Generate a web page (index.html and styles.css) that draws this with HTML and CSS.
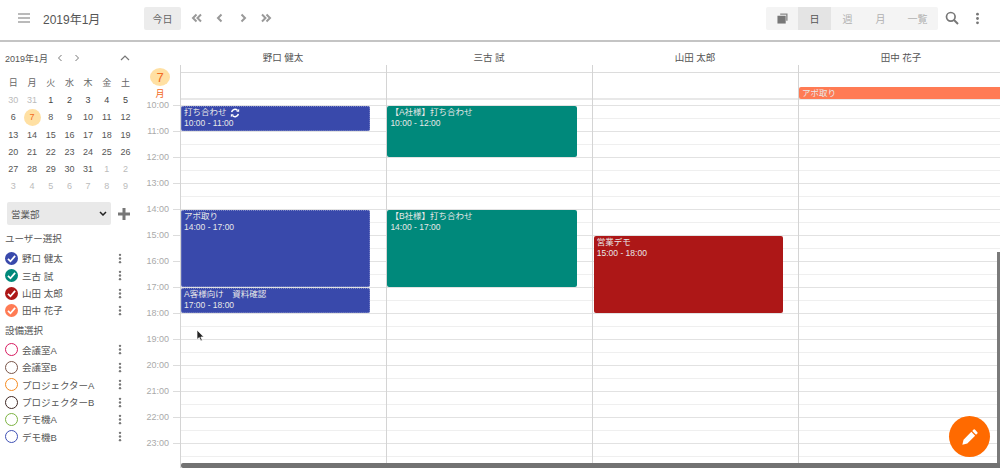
FILE: index.html
```html
<!DOCTYPE html>
<html lang="ja">
<head>
<meta charset="utf-8">
<title>カレンダー</title>
<link rel="stylesheet" href="styles.css">
</head>
<body>
<svg class="defs" width="0" height="0" aria-hidden="true">
  <symbol id="dots" viewBox="0 0 4 12"><circle cx="2" cy="2" r="1.3"/><circle cx="2" cy="6" r="1.3"/><circle cx="2" cy="10" r="1.3"/></symbol>
  <symbol id="check" viewBox="0 0 14 14"><path d="M3.2 7.4 5.9 10 10.9 4.2" fill="none" stroke="#fff" stroke-width="1.9"/></symbol>
</svg>
<header class="topbar">
  <div class="top-left">
    <svg class="menu-ico" viewBox="0 0 12 10"><path d="M0 1h12M0 5h12M0 9h12" stroke="#777" stroke-width="1.1"/></svg>
    <span class="top-title">2019年1月</span>
  </div>
  <button class="today">今日</button>
  <nav class="nav-arrows">
    <svg viewBox="0 0 12 10"><path d="M5.5 1.5 2 5l3.5 3.5M10 1.5 6.5 5 10 8.500" fill="none" stroke="#999" stroke-width="2"/></svg>
    <svg viewBox="0 0 12 10"><path d="M7.500 1.500 4 5l3.500 3.500" fill="none" stroke="#999" stroke-width="2"/></svg>
    <svg viewBox="0 0 12 10"><path d="M4.500 1.500 8 5 4.500 8.500" fill="none" stroke="#999" stroke-width="2"/></svg>
    <svg viewBox="0 0 12 10"><path d="M2 1.500 5.500 5 2 8.500M6.500 1.500 10 5 6.500 8.500" fill="none" stroke="#999" stroke-width="2"/></svg>
  </nav>
  <div class="spacer"></div>
  <div class="views">
    <span class="view view-ico"><svg viewBox="0 0 12 12" width="11" height="11"><path d="M3.500 0.500h8v8h-1.500v-6.500h-6.500z" fill="#888"/><path d="M0.500 3h9v8.500h-9z" fill="#777"/></svg></span>
    <span class="view view-on">日</span>
    <span class="view">週</span>
    <span class="view">月</span>
    <span class="view view-wide">一覧</span>
  </div>
  <svg class="search" viewBox="0 0 14 14"><circle cx="5.800" cy="5.800" r="4.300" fill="none" stroke="#777" stroke-width="1.700"/><path d="M9 9l4 4" stroke="#777" stroke-width="2"/></svg>
  <svg class="top-dots"><use href="#dots" fill="#777"/></svg>
</header>

<div class="main">
  <aside class="side">
    <div class="mini-head">
      <span class="mini-title">2019年1月</span>
      <svg class="mini-arrow" viewBox="0 0 6 8"><path d="M4.500 1 1.500 4l3 3" fill="none" stroke="#777"/></svg>
      <svg class="mini-arrow mini-next" viewBox="0 0 6 8"><path d="M1.500 1l3 3-3 3" fill="none" stroke="#777"/></svg>
      <svg class="mini-up" viewBox="0 0 10 6"><path d="M1 5l4-4 4 4" fill="none" stroke="#777" stroke-width="1.200"/></svg>
    </div>
    <div class="mini-grid">
      <span class="dow">日</span><span class="dow">月</span><span class="dow">火</span><span class="dow">水</span><span class="dow">木</span><span class="dow">金</span><span class="dow">土</span>
      <span class="off">30</span><span class="off">31</span><span class="strong">1</span><span class="strong">2</span><span class="strong">3</span><span class="strong">4</span><span class="strong">5</span>
      <span>6</span><span class="now"><b>7</b></span><span>8</span><span>9</span><span>10</span><span>11</span><span>12</span>
      <span>13</span><span>14</span><span>15</span><span>16</span><span>17</span><span>18</span><span>19</span>
      <span>20</span><span>21</span><span>22</span><span>23</span><span>24</span><span>25</span><span>26</span>
      <span>27</span><span>28</span><span>29</span><span>30</span><span>31</span><span class="off">1</span><span class="off">2</span>
      <span class="off">3</span><span class="off">4</span><span class="off">5</span><span class="off">6</span><span class="off">7</span><span class="off">8</span><span class="off">9</span>
    </div>
    <div class="dept-row">
      <div class="dept"><span>営業部</span><svg viewBox="0 0 8 5" width="8" height="5"><path d="M1 1l3 3 3-3" fill="none" stroke="#222" stroke-width="1.500"/></svg></div>
      <svg class="plus" viewBox="0 0 12 12"><path d="M6 0v12M0 6h12" stroke="#777" stroke-width="3"/></svg>
    </div>
    <h2 class="sec">ユーザー選択</h2>
    <ul class="list">
      <li><span class="chk c-blue"><svg><use href="#check"/></svg></span><span class="name">野口 健太</span><svg class="dots"><use href="#dots"/></svg></li>
      <li><span class="chk c-teal"><svg><use href="#check"/></svg></span><span class="name">三古 試</span><svg class="dots"><use href="#dots"/></svg></li>
      <li><span class="chk c-red"><svg><use href="#check"/></svg></span><span class="name">山田 太郎</span><svg class="dots"><use href="#dots"/></svg></li>
      <li><span class="chk c-orange"><svg><use href="#check"/></svg></span><span class="name">田中 花子</span><svg class="dots"><use href="#dots"/></svg></li>
    </ul>
    <h2 class="sec sec2">設備選択</h2>
    <ul class="list">
      <li><span class="ring r1"></span><span class="name">会議室A</span><svg class="dots"><use href="#dots"/></svg></li>
      <li><span class="ring r2"></span><span class="name">会議室B</span><svg class="dots"><use href="#dots"/></svg></li>
      <li><span class="ring r3"></span><span class="name">プロジェクターA</span><svg class="dots"><use href="#dots"/></svg></li>
      <li><span class="ring r4"></span><span class="name">プロジェクターB</span><svg class="dots"><use href="#dots"/></svg></li>
      <li><span class="ring r5"></span><span class="name">デモ機A</span><svg class="dots"><use href="#dots"/></svg></li>
      <li><span class="ring r6"></span><span class="name">デモ機B</span><svg class="dots"><use href="#dots"/></svg></li>
    </ul>
  </aside>

  <section class="cal">
    <div class="cal-head">
      <div class="gutter-head"></div>
      <div class="col-name">野口 健太</div>
      <div class="col-name">三古 試</div>
      <div class="col-name">山田 太郎</div>
      <div class="col-name">田中 花子</div>
    </div>
    <div class="cal-body">
      <div class="hours">
        <div class="date-badge"><span class="date-num">7</span><span class="date-dow">月</span></div>
        <div class="hour">10:00</div><div class="hour">11:00</div><div class="hour">12:00</div><div class="hour">13:00</div><div class="hour">14:00</div><div class="hour">15:00</div><div class="hour">16:00</div><div class="hour">17:00</div><div class="hour">18:00</div><div class="hour">19:00</div><div class="hour">20:00</div><div class="hour">21:00</div><div class="hour">22:00</div><div class="hour">23:00</div>
      </div>
      <div class="grid">
        <div class="grid-top"></div>
        <div class="grid-allday"></div>
        <div class="slots"></div>
        <div class="col-lines"><i></i><i></i><i></i><i></i></div>

        <div class="ev ev-allday">アポ取り</div>

        <div class="ev blue" style="--s:0;--h:1;--c:0"><p>打ち合わせ <svg viewBox="0 0 12 12" width="10" height="10"><path d="M2 5a4 4 0 0 1 7-2M10 7a4 4 0 0 1-7 2" fill="none" stroke="#fff" stroke-width="1.800"/><path d="M7.500 4.500h3.500v-3.500zM4.500 7.500h-3.500v3.500z" fill="#fff"/></svg></p><p>10:00 - 11:00</p></div>
        <div class="ev blue" style="--s:4;--h:3;--c:0"><p>アポ取り</p><p>14:00 - 17:00</p></div>
        <div class="ev blue" style="--s:7;--h:1;--c:0"><p>A客様向け　資料確認</p><p>17:00 - 18:00</p></div>
        <div class="ev teal" style="--s:0;--h:2;--c:1"><p>【A社様】打ち合わせ</p><p>10:00 - 12:00</p></div>
        <div class="ev teal" style="--s:4;--h:3;--c:1"><p>【B社様】打ち合わせ</p><p>14:00 - 17:00</p></div>
        <div class="ev red" style="--s:5;--h:3;--c:2"><p>営業デモ</p><p>15:00 - 18:00</p></div>
      </div>
    </div>
    <div class="vscroll"></div>
    <div class="hscroll"></div>
  </section>
</div>

<svg class="cursor" viewBox="0 0 9 13"><path d="M1 1v9.500l2.300-2 1.500 3.500 1.500-.7-1.500-3.300h3z" fill="#222" stroke="#fff" stroke-width=".7"/></svg>
<button class="fab"><svg viewBox="0 0 20 20" width="18" height="18"><path d="M14 1.800a1 1 0 0 1 1.400 0l2.800 2.800a1 1 0 0 1 0 1.400l-1.500 1.500-4.200-4.200zM11.500 4.300l4.200 4.200-8.700 8.700-5.500 1.300 1.300-5.500z" fill="#fff"/></svg></button>
</body>
</html>
```
FILE: styles.css
```css
* { box-sizing: border-box; }
html, body { margin: 0; height: 100%; }
body {
  width: 1000px; height: 468px; overflow: hidden; position: relative; background: #fff;
  font-family: "Liberation Sans", "Noto Sans CJK JP", sans-serif; color: #555;
  display: flex; flex-direction: column;
}
.defs { position: absolute; }
.topbar {
  height: 42px; flex: none; display: flex; align-items: center;
  border-bottom: 2px solid #c4c4c4; padding-bottom: 4px;
}
.top-left { display: flex; align-items: center; width: 144px; padding-left: 18px; }
.menu-ico { width: 12px; height: 10px; }
.top-title { margin-left: 13px; font-size: 12px; color: #555; }
.today {
  width: 37px; height: 23px; border: 0; border-radius: 2px; background: #ececec;
  color: #666; font: 10px "Liberation Sans", "Noto Sans CJK JP", sans-serif; padding: 0;
}
.nav-arrows { display: flex; gap: 11px; margin-left: 10px; }
.nav-arrows svg { width: 12px; height: 10px; }
.spacer { flex: 1; }
.views {
  display: flex; height: 23px; background: #f4f4f4; border-radius: 2px; margin-right: 7px;
}
.view {
  width: 33px; display: flex; align-items: center; justify-content: center;
  font-size: 10px; color: #b0b0b0;
}
.view-ico { width: 32px; }
.view-on { background: #e4e4e4; color: #555; }
.view-wide { width: 41px; }
.search { width: 14px; height: 14px; }
.top-dots { width: 5px; height: 13px; margin: 0 20px 0 16px; }
.main { flex: 1; display: flex; min-height: 0; }

.side { width: 140px; flex: none; padding: 7px 0 0 5px; }
.mini-head { display: flex; align-items: center; height: 18px; }
.mini-title { font-size: 9px; color: #555; width: 52px; }
.mini-arrow { width: 6px; height: 8px; }
.mini-next { margin-left: 11px; }
.mini-up { width: 10px; height: 6px; margin-left: 40px; }
.mini-grid {
  display: grid; grid-template-columns: repeat(7, 18.7px); grid-auto-rows: 17.300px;
  margin: 7px 0 0 -1px; font-size: 9px; color: #555; text-align: center;
}
.mini-grid span { display: flex; align-items: center; justify-content: center; }
.mini-grid .dow { color: #666; }
.mini-grid .off { color: #bbb; }
.mini-grid .strong { color: #444; }
.mini-grid .now b {
  width: 17px; height: 17px; border-radius: 50%; background: #ffe0a3;
  color: #f26a21; font-weight: 400; display: flex; align-items: center; justify-content: center;
}
.dept-row { display: flex; align-items: center; margin: 7px 0 0 2px; gap: 7px; }
.dept {
  width: 104px; height: 23px; background: #e9e9e9; border-radius: 2px; padding: 0 4px;
  display: flex; align-items: center; justify-content: space-between; font-size: 9.500px; color: #555;
}
.plus { width: 12px; height: 12px; }
.sec { margin: 7px 0 3.500px; font-size: 9.500px; font-weight: 400; color: #555; line-height: 14px; }
.sec2 { margin-top: 4.500px; margin-bottom: 3.500px; }
.list { list-style: none; margin: 0; padding: 0; }
.list li { display: flex; align-items: center; height: 17.400px; font-size: 9.500px; color: #555; }
.name { margin-left: 4px; flex: 1; white-space: nowrap; }
.chk { width: 13px; height: 13px; border-radius: 50%; flex: none; }
.chk svg { width: 13px; height: 13px; display: block; }
.c-blue { background: #3949ab; }
.c-teal { background: #00897b; }
.c-red { background: #ad1717; }
.c-orange { background: #ff7b54; }
.ring { width: 13px; height: 13px; border-radius: 50%; border: 1.800px solid; flex: none; }
.r1 { border-color: #d81b60; }
.r2 { border-color: #795548; }
.r3 { border-color: #f58a1f; }
.r4 { border-color: #3e2723; }
.r5 { border-color: #7cb342; }
.r6 { border-color: #3f51b5; }
.dots { width: 4px; height: 11px; fill: #777; margin-right: 18px; flex: none; }

.cal { flex: 1; min-width: 0; display: flex; flex-direction: column; position: relative; overflow: hidden; }
.cal-head { display: flex; height: 23px; flex: none; align-items: center; padding-top: 6px; }
.gutter-head { width: 40px; flex: none; }
.col-name { width: 206px; flex: none; text-align: center; font-size: 9.500px; color: #555; }
.cal-body { flex: 1; display: flex; min-height: 0; }
.hours { width: 40px; flex: none; font-size: 9px; color: #aaa; position: relative; }
.date-badge { height: 32px; margin-top: 3px; display: flex; flex-direction: column; align-items: center; }
.date-num {
  width: 20px; height: 20px; border-radius: 50%; background: #ffe0a3; color: #f26a21;
  font-size: 13px; display: flex; align-items: center; justify-content: center;
}
.date-dow { font-size: 9px; color: #f26a21; margin-top: 3px; line-height: 11px; }
.hour {
  height: 26px; display: flex; align-items: center; justify-content: flex-end; line-height: 10px;
  padding-right: 11px; color: #aaa; white-space: nowrap; transform: translateY(-8px); position: relative;
}
.hour::after { content: ""; position: absolute; right: 0; top: 13px; width: 7px; height: 1px; background: #dcdcdc; }
.grid { flex: 1; min-width: 0; position: relative; }
.grid-top { height: 7px; }
.grid-allday { height: 28px; border-top: 1px solid #dcdcdc; border-bottom: 2px solid #e8e8e8; }
.slots {
  height: 364px; margin-top: 5px;
  background-image:
    repeating-linear-gradient(to bottom, #e2e2e2 0 1px, transparent 1px 13px, #efefef 13px 14px, transparent 14px 26px);
}
.col-lines { position: absolute; inset: 0; display: flex; pointer-events: none; }
.col-lines i { width: 206px; flex: none; border-left: 1px solid #d4d4d4; display: block; }
.ev {
  position: absolute; color: #e8e8e8; font-size: 8.500px; line-height: 11px; padding: 1px 3px 0;
  border-radius: 2px; overflow: hidden; width: 189.400px;
  left: calc(var(--c) * 206.400px + 1px);
  top: calc(41px + var(--s) * 26px);
  height: calc(var(--h) * 26px - 1px);
}
.ev p { margin: 0; white-space: nowrap; display: flex; align-items: center; gap: 3px; height: 11px; }
.blue { background: #3949ab; outline: 1px dotted rgba(255, 255, 255, .35); outline-offset: -1px; }
.teal { background: #00897b; }
.red { background: #ad1717; }
.ev-allday {
  left: 619px; width: 220px; top: 22px; height: 12px; background: #ff7b54; line-height: 12px; padding-top: 0;
}
.vscroll { position: absolute; right: 0; top: 210px; bottom: 5px; width: 3px; background: #7a7a7a; }
.hscroll { position: absolute; left: 41px; right: 0; bottom: 0; height: 5px; background: #727272; border-radius: 2px 0 0 2px; }
.cursor { position: absolute; left: 196px; top: 329px; width: 9px; height: 13px; }
.fab {
  position: absolute; left: 949px; top: 416px; width: 41px; height: 41px; border: 0; padding: 0;
  border-radius: 50%; background: #ff6a00; display: flex; align-items: center; justify-content: center;
}
```
